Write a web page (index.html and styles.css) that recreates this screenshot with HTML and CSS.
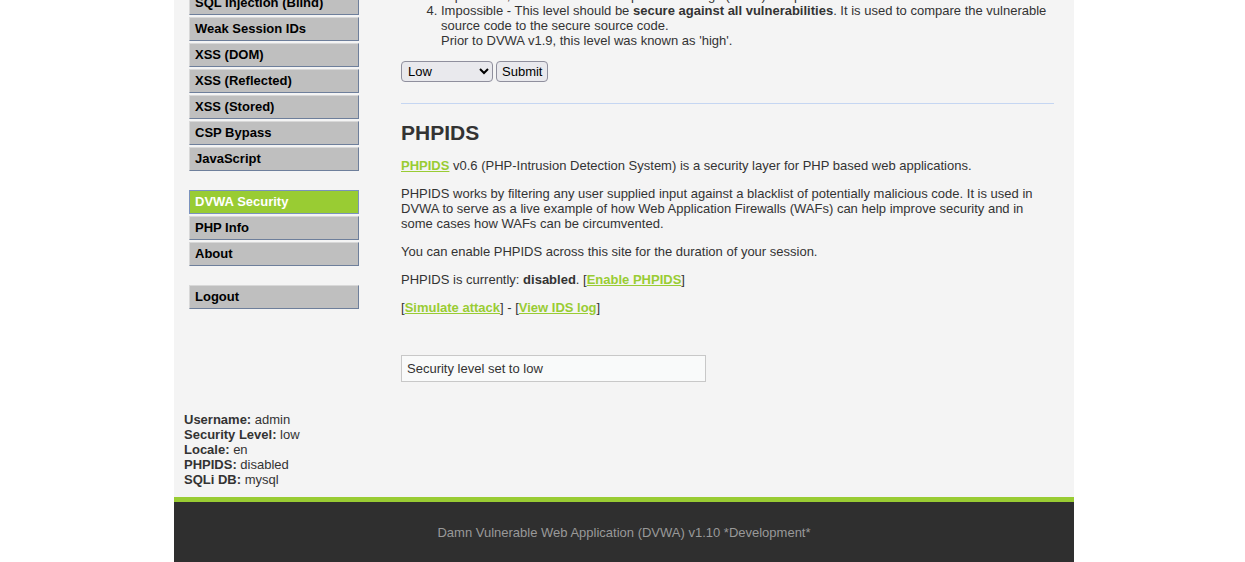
FILE: index.html
```html
<!DOCTYPE html>
<html lang="en">
<head>
<meta charset="utf-8">
<title>DVWA Security :: Damn Vulnerable Web Application (DVWA) v1.10 *Development*</title>
<link rel="stylesheet" href="styles.css">
</head>
<body>
<div class="page">
  <div class="container">
    <div class="columns">
      <nav class="menu">
        <ul class="menu-block">
          <li><a href="#">SQL Injection (Blind)</a></li>
          <li><a href="#">Weak Session IDs</a></li>
          <li><a href="#">XSS (DOM)</a></li>
          <li><a href="#">XSS (Reflected)</a></li>
          <li><a href="#">XSS (Stored)</a></li>
          <li><a href="#">CSP Bypass</a></li>
          <li><a href="#">JavaScript</a></li>
        </ul>
        <ul class="menu-block">
          <li class="selected"><a href="#">DVWA Security</a></li>
          <li><a href="#">PHP Info</a></li>
          <li><a href="#">About</a></li>
        </ul>
        <ul class="menu-block">
          <li><a href="#">Logout</a></li>
        </ul>
      </nav>
      <main class="main">
        <ol class="levels" start="3">
          <li>High - This option is an extension to the medium difficulty, with a mixture of <em>harder or alternative bad practices</em> to attempt to secure the code. The vulnerability may not allow the same extent of the exploitation, similar in various Capture The Flags (CTFs) competitions.</li>
          <li>Impossible - This level should be <em>secure against all vulnerabilities</em>. It is used to compare the vulnerable source code to the secure source code.<br>Prior to DVWA v1.9, this level was known as 'high'.</li>
        </ol>
        <form class="level-form" action="#" method="post">
          <select class="level-select" name="security">
            <option value="low" selected>Low</option>
            <option value="medium">Medium</option>
            <option value="high">High</option>
            <option value="impossible">Impossible</option>
          </select>
          <input class="submit" type="submit" value="Submit" name="seclev_submit">
        </form>
        <hr class="divider">
        <h2 class="title">PHPIDS</h2>
        <p><a href="#">PHPIDS</a> v0.6 (PHP-Intrusion Detection System) is a security layer for PHP based web applications.</p>
        <p>PHPIDS works by filtering any user supplied input against a blacklist of potentially malicious code. It is used in DVWA to serve as a live example of how Web Application Firewalls (WAFs) can help improve security and in some cases how WAFs can be circumvented.</p>
        <p>You can enable PHPIDS across this site for the duration of your session.</p>
        <p>PHPIDS is currently: <em>disabled</em>. [<a href="#">Enable PHPIDS</a>]</p>
        <p>[<a href="#">Simulate attack</a>] - [<a href="#">View IDS log</a>]</p>
        <div class="message">Security level set to low</div>
      </main>
    </div>
    <div class="system-info">
      <div><em>Username:</em> admin</div>
      <div><em>Security Level:</em> low</div>
      <div><em>Locale:</em> en</div>
      <div><em>PHPIDS:</em> disabled</div>
      <div><em>SQLi DB:</em> mysql</div>
    </div>
  </div>
  <footer class="footer">
    <p>Damn Vulnerable Web Application (DVWA) v1.10 *Development*</p>
  </footer>
</div>
</body>
</html>
```

FILE: styles.css
```css
html, body {
  background: #ffffff;
}

body {
  margin: 0;
  padding-left: 3px;
  font-family: "Liberation Sans", Arial, sans-serif;
  font-size: 13px;
  color: #333333;
}

em {
  font-style: normal;
  font-weight: bold;
}

a {
  color: #99cc33;
  font-weight: bold;
  text-decoration: underline;
}

.page {
  width: 900px;
  margin: 0 auto;
}

.container {
  background: #f4f4f4;
}

.columns {
  display: flex;
  align-items: flex-start;
  margin-top: -50px;
}

.menu {
  width: 170px;
  margin-left: 15px;
  padding-top: 41px;
  flex: none;
}

.menu-block {
  list-style: none;
  margin: 0 0 19px;
  padding: 0;
}

.menu-block a {
  display: block;
  margin-bottom: 2px;
  padding: 0 5px;
  line-height: 22px;
  font-weight: bold;
  color: #000000;
  text-decoration: none;
  background: #bfbfbf;
  border: 1px solid;
  border-color: #d8d8d8 #6e7f9b #6e7f9b #d8d8d8;
}

.menu-block .selected a {
  background: #99cc33;
  color: #ffffff;
  border-color: #7b92bd;
}

.main {
  width: 653px;
  margin-left: 42px;
  padding-top: 8px;
  flex: none;
}

.levels {
  margin: 0 0 13px;
  padding-left: 40px;
}

.level-form {
  display: flex;
  align-items: center;
  gap: 3px;
  height: 21px;
  margin: 0;
}

.level-select {
  box-sizing: border-box;
  width: 92px;
  height: 21px;
  padding: 0 2px;
  font-family: "Liberation Sans", Arial, sans-serif;
  font-size: 13px;
  color: #000;
  background-color: #e9e9ed;
  border: 1px solid #8f8f9d;
  border-radius: 4px;
}

.submit {
  box-sizing: border-box;
  height: 21px;
  padding: 0 5px;
  font-family: "Liberation Sans", Arial, sans-serif;
  font-size: 13px;
  color: #000;
  background-color: #e9e9ed;
  border: 1px solid #8f8f9d;
  border-radius: 4px;
}

.divider {
  height: 0;
  margin: 21px 0 17px;
  border: 0;
  border-top: 1px solid #c5d6f2;
}

.title {
  margin: 0 0 13px;
  font-size: 21px;
  color: #333333;
}

.main p {
  margin: 0 0 13px;
}

.message {
  box-sizing: border-box;
  width: 305px;
  margin-top: 40px;
  padding: 5px;
  background: #f9fafa;
  border: 1px solid #c8c8c8;
}

.system-info {
  padding: 30px 10px 10px;
  line-height: 15px;
}

.footer {
  background: #2f2f2f;
  border-top: 5px solid #99cc33;
  color: #999999;
  text-align: center;
  padding: 23px 0 40px;
}

.footer p {
  margin: 0;
}
```
